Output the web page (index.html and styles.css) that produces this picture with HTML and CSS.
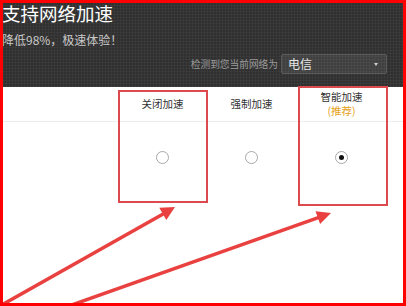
FILE: index.html
```html
<!DOCTYPE html>
<html lang="zh-CN">
<head>
<meta charset="utf-8">
<link rel="stylesheet" href="styles.css">
</head>
<body>
<div class="frame">
  <header class="hero">
    <h1 class="title">支持网络加速</h1>
    <p class="subtitle">降低98%，极速体验！</p>
    <div class="detect">
      <span class="detect-label">检测到您当前网络为</span>
      <div class="select"><span>电信</span><i class="caret"></i></div>
    </div>
  </header>
  <section class="options">
    <div class="head-row">
      <div class="col"><span>关闭加速</span></div>
      <div class="col"><span>强制加速</span></div>
      <div class="col"><span>智能加速</span><span class="rec">(推荐)</span></div>
    </div>
    <div class="radio-row">
      <div class="col"><span class="radio"></span></div>
      <div class="col"><span class="radio"></span></div>
      <div class="col"><span class="radio checked"></span></div>
    </div>
  </section>
  <div class="mark mark-1"></div>
  <div class="mark mark-2"></div>
  <svg class="arrows" width="406" height="306" viewBox="0 0 406 306">
    <line x1="0" y1="306" x2="164" y2="213.5" stroke="#e8413f" stroke-width="3.5"/>
    <polygon points="175,207 166.3,219.9 159.3,207.7" fill="#e8413f"/>
    <line x1="66" y1="307" x2="319" y2="217.3" stroke="#e8413f" stroke-width="3.5"/>
    <polygon points="331,213 320.1,224.1 315.5,211.3" fill="#e8413f"/>
  </svg>
</div>
</body>
</html>
```

FILE: styles.css
```css
html, body {
  margin: 0;
  padding: 0;
  background: #fff;
}
.frame {
  position: relative;
  width: 406px;
  height: 306px;
  box-sizing: border-box;
  border: 3px solid #ff0000;
  overflow: hidden;
  font-family: "Noto Sans CJK SC", "Noto Sans", sans-serif;
  background: #fff;
}
.hero {
  height: 84px;
  background-color: #303030;
  background-image:
    linear-gradient(90deg, rgba(255,255,255,0.035) 1px, transparent 1px),
    linear-gradient(0deg, rgba(255,255,255,0.035) 1px, transparent 1px);
  background-size: 3px 3px;
  display: flex;
  flex-direction: column;
}
.title {
  margin: 0 0 0 -1px;
  font-size: 18.5px;
  font-weight: normal;
  line-height: 20px;
  color: #fff;
}
.subtitle {
  margin: 9px 0 0 -1px;
  font-size: 12px;
  line-height: 16px;
  color: #c8c8c8;
}
.detect {
  display: flex;
  align-items: center;
  justify-content: flex-end;
  gap: 3px;
  margin-top: 6px;
  padding-right: 16px;
}
.detect-label {
  font-size: 9.7px;
  color: #9a9a9a;
  line-height: 14px;
}
.select {
  position: relative;
  width: 98px;
  height: 18px;
  border: 1px solid #5a5a5a;
  border-radius: 2px;
  background: rgba(255,255,255,0.08);
  display: flex;
  align-items: center;
  padding-left: 6px;
}
.select span {
  font-size: 12px;
  color: #e6e6e6;
  line-height: 16px;
}
.caret {
  position: absolute;
  right: 8px;
  top: 8px;
  width: 0;
  height: 0;
  border-left: 2.5px solid transparent;
  border-right: 2.5px solid transparent;
  border-top: 3px solid #cfcfcf;
}
.options {
  display: flex;
  flex-direction: column;
}
.head-row {
  display: flex;
  height: 34px;
  border-bottom: 1px solid #ececec;
  padding-left: 115px;
}
.radio-row {
  display: flex;
  padding-left: 115px;
  height: 70px;
  align-items: center;
}
.col {
  width: 89px;
  display: flex;
  flex-direction: column;
  align-items: center;
  justify-content: center;
  font-size: 10.5px;
  line-height: 14px;
  color: #333;
}
.head-row .col:nth-child(3) {
  justify-content: flex-start;
  padding-top: 3px;
  width: 91px;
}
.radio-row .col:nth-child(3) {
  width: 91px;
}
.rec {
  color: #e5a21b;
  font-size: 10.5px;
}
.radio {
  width: 11px;
  height: 11px;
  border: 1px solid #a8a8a8;
  border-radius: 50%;
  background: #fff;
  position: relative;
}
.radio.checked::after {
  content: "";
  position: absolute;
  left: 3px;
  top: 3px;
  width: 5px;
  height: 5px;
  border-radius: 50%;
  background: #111;
}
.mark {
  position: absolute;
  border: 2px solid #dc4a4e;
  box-sizing: border-box;
}
.mark-1 {
  left: 115px;
  top: 87px;
  width: 90px;
  height: 113px;
}
.mark-2 {
  left: 295px;
  top: 83px;
  width: 90px;
  height: 120px;
}
.arrows {
  position: absolute;
  left: -3px;
  top: -3px;
}
```
